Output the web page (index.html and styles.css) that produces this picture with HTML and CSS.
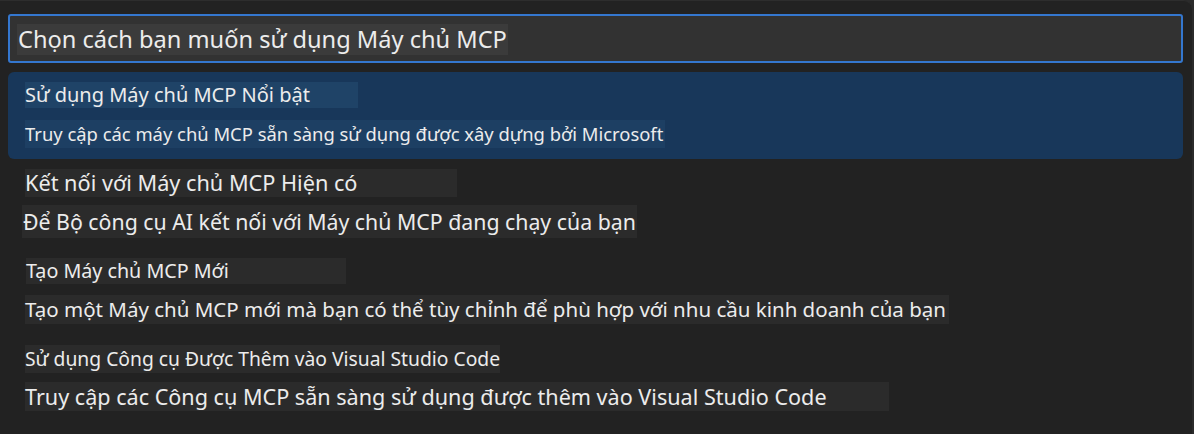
FILE: index.html
```html
<!DOCTYPE html>
<html lang="vi">
<head>
<meta charset="utf-8">
<title>MCP</title>
<link rel="stylesheet" href="styles.css">
</head>
<body>
<div class="panel">
  <div class="input">
    <span class="hl hl-input">Chọn cách bạn muốn sử dụng Máy chủ MCP</span>
  </div>
  <div class="item selected">
    <div class="row r1"><span class="hl hl-sel w1">Sử dụng Máy chủ MCP Nổi bật</span></div>
    <div class="row r2"><span class="hl hl-sel2 w2">Truy cập các máy chủ MCP sẵn sàng sử dụng được xây dựng bởi Microsoft</span></div>
  </div>
  <div class="item plain">
    <div class="row r3"><span class="hl hl-plain w3">Kết nối với Máy chủ MCP Hiện có</span></div>
    <div class="row r4"><span class="hl hl-plain w4">Để Bộ công cụ AI kết nối với Máy chủ MCP đang chạy của bạn</span></div>
  </div>
  <div class="item plain">
    <div class="row r5"><span class="hl hl-plain w5">Tạo Máy chủ MCP Mới</span></div>
    <div class="row r6"><span class="hl hl-plain w6">Tạo một Máy chủ MCP mới mà bạn có thể tùy chỉnh để phù hợp với nhu cầu kinh doanh của bạn</span></div>
  </div>
  <div class="item plain">
    <div class="row r7"><span class="hl hl-plain w7">Sử dụng Công cụ Được Thêm vào Visual Studio Code</span></div>
    <div class="row r8"><span class="hl hl-plain w8">Truy cập các Công cụ MCP sẵn sàng sử dụng được thêm vào Visual Studio Code</span></div>
  </div>
</div>
</body>
</html>
```
FILE: styles.css
```css
html, body {
  margin: 0;
  padding: 0;
  background: #2b2b2b;
  width: 1194px;
  height: 434px;
  overflow: hidden;
}
body {
  font-family: "Noto Sans", "Open Sans", sans-serif;
  color: #ececec;
}
.panel {
  box-sizing: border-box;
  width: 1192px;
  height: 434px;
  background: #222222;
  border-top: 1px solid #2d2d2d;
  border-top-right-radius: 9px;
  padding: 13px 9px 0 8px;
}
.input {
  box-sizing: border-box;
  height: 49px;
  border: 2px solid #3477cf;
  border-radius: 3px;
  background: #323232;
  padding: 8px 0 0 7px;
}
.hl {
  display: inline-block;
  white-space: nowrap;
  box-sizing: border-box;
  vertical-align: top;
}
.hl-input {
  background: #3b3b3b;
  height: 31px;
  line-height: 31px;
  font-size: 23.6px;
  width: 491px;
  padding-left: 1px;
}
.item {
  padding-left: 17px;
}
.selected {
  margin-top: 9px;
  height: 87px;
  box-sizing: border-box;
  background: #18375a;
  border-radius: 6px;
  padding-top: 10px;
}
.hl-sel { background: #1f4367; }
.hl-sel2 { background: #1d3f63; }
.hl-plain { background: #2b2b2b; }

.r1 .hl { height: 26px; line-height: 26px; font-size: 20px; }
.r2 { margin-top: 12px; }
.r2 .hl { height: 28px; line-height: 28px; font-size: 18.4px; }
.w1 { width: 333px; }
.w2 { width: 640px; }

.r3 { margin-top: 10px; }
.r3 .hl { height: 28px; line-height: 28px; font-size: 21.7px; }
.w3 { width: 432px; }
.r4 { margin-top: 8px; margin-left: -3px; }
.r4 .hl { height: 33px; line-height: 33px; font-size: 21.3px; padding-left: 1px; }
.w4 { width: 615px; }

.r5 { margin-top: 20px; margin-left: 1px; }
.r5 .hl { height: 26px; line-height: 26px; font-size: 19.7px; }
.w5 { width: 320px; }
.r6 { margin-top: 11px; }
.r6 .hl { height: 29px; line-height: 29px; font-size: 20.5px; }
.w6 { width: 924px; }

.r7 { margin-top: 21px; }
.r7 .hl { height: 28px; line-height: 28px; font-size: 19.3px; }
.w7 { width: 475px; }
.r8 { margin-top: 9px; }
.r8 .hl { height: 29px; line-height: 29px; font-size: 21.6px; }
.w8 { width: 864px; }
```
